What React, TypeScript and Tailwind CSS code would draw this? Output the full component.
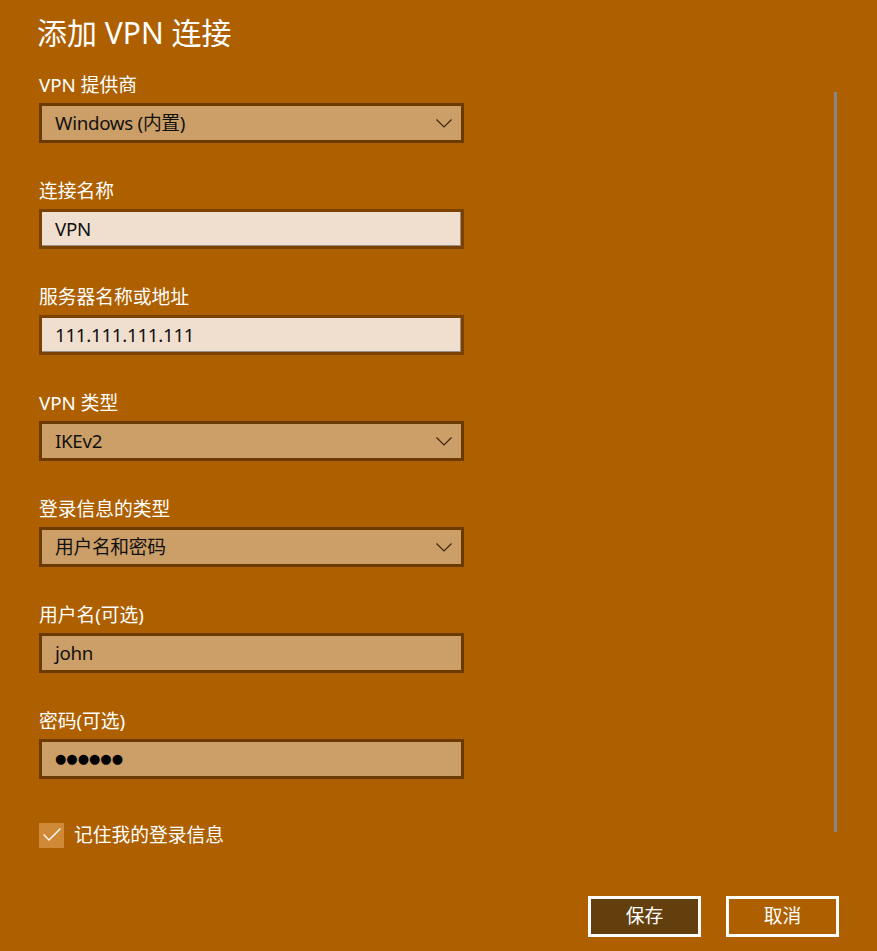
import { Check } from "lucide-react";

type Field = {
  label: string;
  value: string;
  kind: "select" | "text" | "filled" | "password";
};

const fields: Field[] = [
  { label: "VPN 提供商", value: "Windows (内置)", kind: "select" },
  { label: "连接名称", value: "VPN", kind: "text" },
  { label: "服务器名称或地址", value: "111.111.111.111", kind: "text" },
  { label: "VPN 类型", value: "IKEv2", kind: "select" },
  { label: "登录信息的类型", value: "用户名和密码", kind: "select" },
  { label: "用户名(可选)", value: "john", kind: "filled" },
  { label: "密码(可选)", value: "●●●●●●", kind: "password" },
];

function Chevron() {
  return (
    <svg width="16" height="9" viewBox="0 0 16 9" className="ml-auto mr-[9px]">
      <path d="M0.5 0.5 L8 8 L15.5 0.5" fill="none" stroke="#3a2408" strokeWidth="1.2" />
    </svg>
  );
}

function FieldBox({ field }: { field: Field }) {
  const light = field.kind === "text";
  return (
    <div
      className={
        light
          ? "flex h-[40px] items-center border-[3px] border-[#7a4100] bg-[#f0dfce] pl-[13px] shadow-[inset_-1px_-1px_0_#9a8f86]"
          : "flex h-[40px] items-center border-[3px] border-[#6c3a00] bg-[#cd9f68] pl-[13px]"
      }
    >
      {field.kind === "password" ? (
        <span className="font-['DejaVu_Sans'] text-[13px] text-black">{field.value}</span>
      ) : (
        <span className="text-[18.75px] leading-none tracking-[-0.3px] text-[#111]">{field.value}</span>
      )}
      {field.kind === "select" && <Chevron />}
    </div>
  );
}

export default function App() {
  return (
    <div className="relative h-[951px] w-full overflow-hidden bg-[#ae5f00] font-['Noto_Sans','Noto_Sans_CJK_SC',sans-serif] text-white">
      <div className="pl-[39px] pt-[13px]">
        <h1 className="ml-[-2px] text-[30px] leading-[40px]">添加 VPN 连接</h1>

        <div className="mt-[19px] flex w-[425px] flex-col gap-[35px]">
          {fields.map((f) => (
            <div key={f.label} className="flex flex-col gap-[5px]">
              <label className="text-[18.75px] leading-[26px]">{f.label}</label>
              <FieldBox field={f} />
            </div>
          ))}
        </div>

        {/* remember login */}
        <div className="mt-[43px] flex items-center gap-[10px]">
          <div className="flex h-[25px] w-[25px] items-center justify-center bg-[#d08a37]">
            <Check size={24} strokeWidth={1.4} color="white" />
          </div>
          <span className="text-[18.75px] leading-[26px]">记住我的登录信息</span>
        </div>
      </div>

      <div className="mt-[48px] flex justify-end gap-[25px] pr-[38px]">
        <button className="h-[41px] w-[113px] border-[3px] border-white bg-[#643f0e] text-[18.75px] text-white">
          保存
        </button>
        <button className="h-[41px] w-[113px] border-[3px] border-white text-[18.75px] text-white">
          取消
        </button>
      </div>

      {/* scroll indicator */}
      <div className="absolute left-[834px] top-[92px] h-[740px] w-[3px] bg-[#868686]" />
    </div>
  );
}
